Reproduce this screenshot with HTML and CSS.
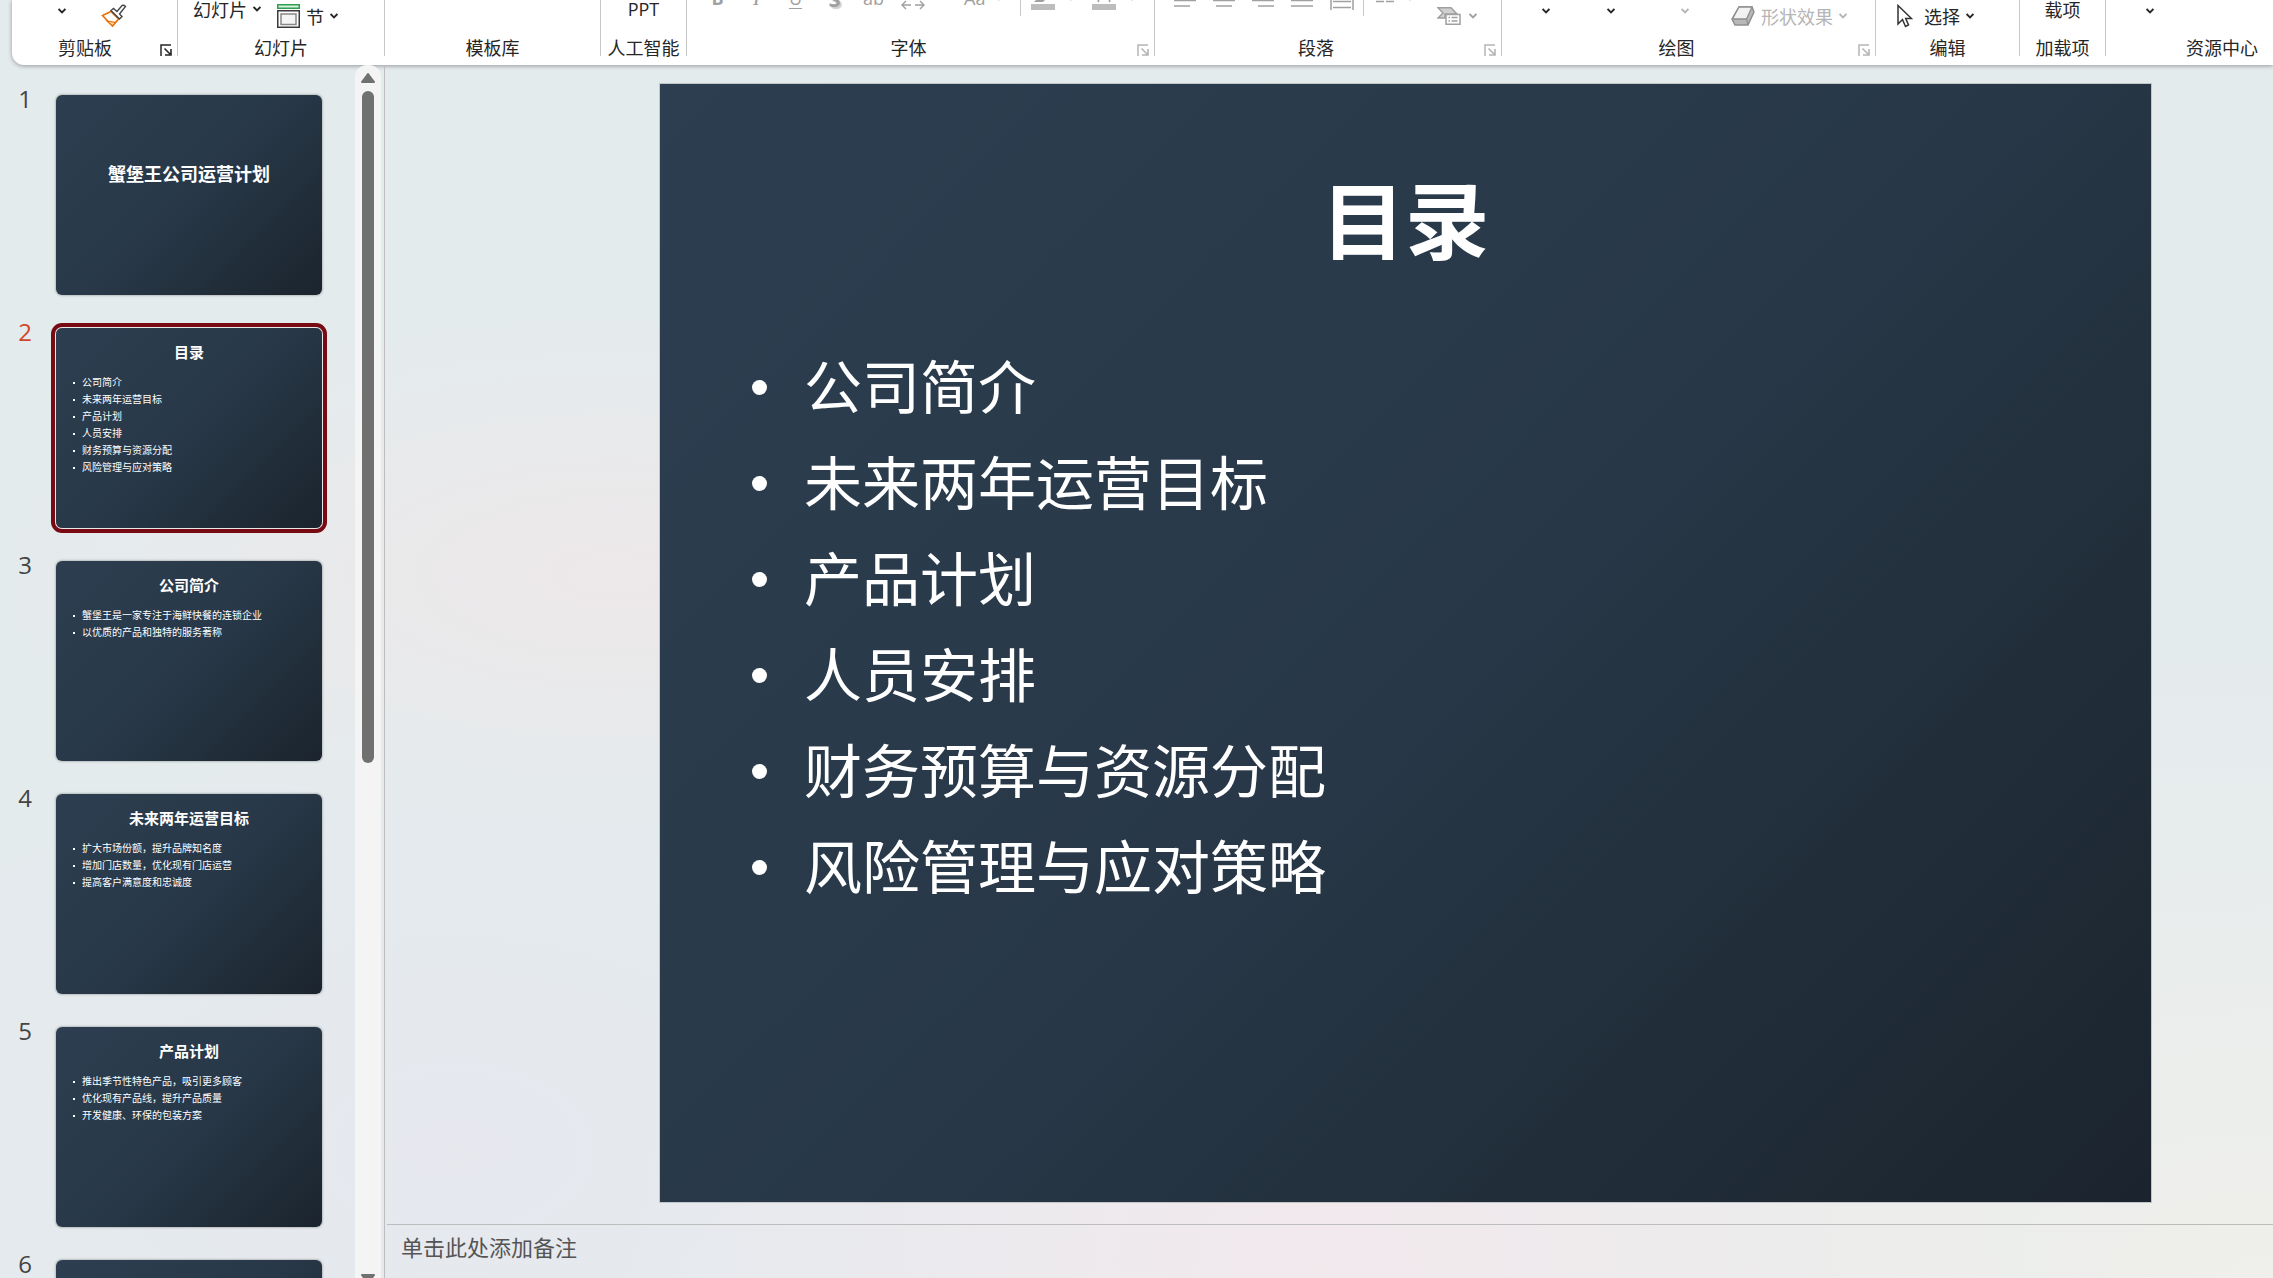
FILE: index.html
```html
<!DOCTYPE html>
<html lang="zh-CN">
<head>
    <meta charset="UTF-8">
    <meta name="viewport" content="width=device-width, initial-scale=1.0">
    <title>蟹堡王公司运营计划</title>
    <link rel="stylesheet" href="styles.css">
</head>
<body>
    <!-- Shared symbols -->
    <svg class="symbols" aria-hidden="true">
        <symbol id="chevron" viewBox="0 0 8 8">
            <path d="M0.600 2 L4 5.400 L7.400 2" fill="none" stroke="currentColor" stroke-width="1.8"/>
        </symbol>
        <symbol id="launcher" viewBox="0 0 12 12">
            <path d="M1 12 V1 H11" fill="none" stroke="currentColor" stroke-width="1.5"/>
            <path d="M4.5 4.5 L10.5 10.5 M11 5 V11 H5" fill="none" stroke="currentColor" stroke-width="1.6"/>
        </symbol>
    </svg>

    <header class="ribbon">
        <section class="group clipboard">
            <div class="tools">
                <button class="tool upper" aria-label="粘贴选项"><svg class="chevron"><use href="#chevron"/></svg></button>
                <button class="tool lower" aria-label="格式刷">
                    <svg width="26" height="24" viewBox="0 0 26 24">
                        <path d="M1.5 11.5 L10 7.5 L17.500 15 L11.500 22 Z" fill="#fff" stroke="#e8710a" stroke-width="1.6"/>
                        <path d="M6 17 L14.500 18.500 L11.500 22 Z" fill="#fcd9a0" stroke="#e8710a" stroke-width="1.2"/>
                        <path d="M10 6.500 L12.500 4.500 L16 7.500 L21 1.500 Q23.500 0.500 24.500 2.500 L18.500 10 L21 12.500 L18.500 15 Z" fill="#fff" stroke="#444" stroke-width="1.4"/>
                    </svg>
                </button>
            </div>
            <div class="caption"><span>剪贴板</span><button class="launcher" aria-label="剪贴板选项"><svg width="12" height="12"><use href="#launcher"/></svg></button></div>
        </section>

        <section class="group slides">
            <div class="tools">
                <button class="tool top">幻灯片<svg class="chevron"><use href="#chevron"/></svg></button>
                <button class="tool lower">
                    <svg width="23" height="24" viewBox="0 0 23 24">
                        <rect x="0.750" y="0.750" width="21.500" height="3.500" fill="#d9f2df" stroke="#2f9e4f" stroke-width="1.500"/>
                        <rect x="0.750" y="6.750" width="21.500" height="16.500" fill="#fff" stroke="#3b3b3b" stroke-width="1.500"/>
                        <rect x="4" y="10" width="15" height="10.500" fill="#f5f5f5" stroke="#8a8886" stroke-width="1.500"/>
                    </svg>节<svg class="chevron"><use href="#chevron"/></svg>
                </button>
            </div>
            <div class="caption"><span>幻灯片</span></div>
        </section>

        <section class="group templates">
            <div class="tools"></div>
            <div class="caption"><span>模板库</span></div>
        </section>

        <section class="group ai">
            <div class="tools"><button class="tool top">PPT</button></div>
            <div class="caption"><span>人工智能</span></div>
        </section>

        <section class="group font">
            <div class="tools disabled">
                <button class="tool cut format bold" disabled>B</button>
                <button class="tool cut format italic" disabled>I</button>
                <button class="tool cut format underline" disabled>U</button>
                <button class="tool cut format shadow" disabled>S</button>
                <button class="tool cut format strike" disabled>ab</button>
                <button class="tool cut format" disabled aria-label="字符间距">
                    <svg width="24" height="34" viewBox="0 0 24 34"><path d="M10 24 H1 M5 20 L1 24 L5 28 M14 24 H23 M19 20 L23 24 L19 28" fill="none" stroke="currentColor" stroke-width="1.400"/></svg>
                </button>
                <button class="tool cut case" disabled>Aa<svg class="chevron"><use href="#chevron"/></svg></button>
                <span class="divider"></span>
                <button class="tool cut ink" disabled aria-label="突出显示">
                    <svg width="24" height="34" viewBox="0 0 24 34"><path d="M3 21 L10 14 L15 18 L12 21 Z" fill="currentColor"/><rect y="23" width="24" height="6" fill="#bdbdbd"/></svg><svg class="chevron"><use href="#chevron"/></svg>
                </button>
                <button class="tool cut ink" disabled aria-label="字体颜色">
                    <svg width="24" height="34" viewBox="0 0 24 34"><path d="M6 21 L12 5 L18 21 M8 16.500 H16" fill="none" stroke="currentColor" stroke-width="1.600"/><rect y="23" width="24" height="6" fill="#bdbdbd"/></svg><svg class="chevron"><use href="#chevron"/></svg>
                </button>
            </div>
            <div class="caption"><span>字体</span><button class="launcher" disabled aria-label="字体选项"><svg width="12" height="12"><use href="#launcher"/></svg></button></div>
        </section>

        <section class="group paragraph">
            <div class="tools disabled">
                <button class="tool cut align" disabled aria-label="左对齐"><svg width="22" height="34"><path d="M0 19.500 H22 M0 25 H16" stroke="currentColor" stroke-width="1.500"/></svg></button>
                <button class="tool cut align" disabled aria-label="居中"><svg width="22" height="34"><path d="M0 19.500 H22 M3 25 H19" stroke="currentColor" stroke-width="1.500"/></svg></button>
                <button class="tool cut align" disabled aria-label="右对齐"><svg width="22" height="34"><path d="M0 19.500 H22 M6 25 H22" stroke="currentColor" stroke-width="1.500"/></svg></button>
                <button class="tool cut align" disabled aria-label="两端对齐"><svg width="22" height="34"><path d="M0 19.500 H22 M0 25 H22" stroke="currentColor" stroke-width="1.500"/></svg></button>
                <button class="tool cut align" disabled aria-label="分散对齐"><svg width="24" height="34"><path d="M1 7 V29 M23 7 V29 M3 20.500 H21 M3 26.500 H21" stroke="currentColor" stroke-width="1.500"/></svg></button>
                <span class="divider"></span>
                <button class="tool cut columns" disabled aria-label="分栏"><svg width="18" height="34"><path d="M0 20.500 H8 M10 20.500 H18" stroke="currentColor" stroke-width="1.500"/></svg><svg class="chevron"><use href="#chevron"/></svg></button>
                <button class="tool lower smart" disabled aria-label="转换为 SmartArt">
                    <svg width="24" height="18" viewBox="0 0 24 18">
                        <path d="M1 0.750 H14 L20 7 H8 V11 H1 L6 6 Z" fill="#d0d0d0" stroke="#a0a0a0" stroke-width="1.500"/>
                        <rect x="9" y="7.500" width="14" height="9.750" fill="#fff" stroke="#a0a0a0" stroke-width="1.500"/>
                        <path d="M11.500 10.500 H13 M14.500 10.500 H20.500 M11.500 14 H13 M14.500 14 H20.500" stroke="#a0a0a0" stroke-width="1.400"/>
                    </svg><svg class="chevron"><use href="#chevron"/></svg>
                </button>
            </div>
            <div class="caption"><span>段落</span><button class="launcher" disabled aria-label="段落选项"><svg width="12" height="12"><use href="#launcher"/></svg></button></div>
        </section>

        <section class="group drawing">
            <div class="tools">
                <button class="tool upper" aria-label="形状"><svg class="chevron"><use href="#chevron"/></svg></button>
                <button class="tool upper" aria-label="排列"><svg class="chevron"><use href="#chevron"/></svg></button>
                <button class="tool upper quick" disabled aria-label="快速样式"><svg class="chevron"><use href="#chevron"/></svg></button>
                <button class="tool lower effects" disabled>
                    <svg width="24" height="20" viewBox="0 0 24 20">
                        <path d="M8 1 H21 L23 6 L17 19 H4 L1 13 Z" fill="#b8b8b8" stroke="#8f8f8f" stroke-width="1.500"/>
                        <path d="M8 1 H21 L15.500 13 H1.500 Z" fill="#f2f2f2" stroke="#8f8f8f" stroke-width="1.300"/>
                        <path d="M15.500 13 L17 19" stroke="#8f8f8f" stroke-width="1.200"/>
                    </svg>形状效果<svg class="chevron"><use href="#chevron"/></svg>
                </button>
            </div>
            <div class="caption"><span>绘图</span><button class="launcher" disabled aria-label="绘图选项"><svg width="12" height="12"><use href="#launcher"/></svg></button></div>
        </section>

        <section class="group editing">
            <div class="tools">
                <button class="tool lower select">
                    <svg width="16" height="24" viewBox="0 0 16 24"><path d="M1 1.500 V20 L5.500 15.500 L8.500 22.500 L11.500 21 L8.700 14.500 H14.500 Z" fill="#fff" stroke="#333" stroke-width="1.500"/></svg>选择<svg class="chevron"><use href="#chevron"/></svg>
                </button>
            </div>
            <div class="caption"><span>编辑</span></div>
        </section>

        <section class="group addins">
            <div class="tools"><button class="tool top">载项</button></div>
            <div class="caption"><span>加载项</span></div>
        </section>

        <section class="group resources">
            <div class="tools"><button class="tool upper" aria-label="资源选项"><svg class="chevron"><use href="#chevron"/></svg></button></div>
            <div class="caption"><span>资源中心</span></div>
        </section>
    </header>

    <main class="workspace">
        <nav class="slide-panel" aria-label="幻灯片">
            <ol class="thumb-list">
                <li>
                    <span class="number">1</span>
                    <button class="thumb cover">
                        <strong>蟹堡王公司运营计划</strong>
                    </button>
                </li>
                <li class="selected">
                    <span class="number">2</span>
                    <button class="thumb">
                        <strong>目录</strong>
                        <span class="line">公司简介</span>
                        <span class="line">未来两年运营目标</span>
                        <span class="line">产品计划</span>
                        <span class="line">人员安排</span>
                        <span class="line">财务预算与资源分配</span>
                        <span class="line">风险管理与应对策略</span>
                    </button>
                </li>
                <li>
                    <span class="number">3</span>
                    <button class="thumb">
                        <strong>公司简介</strong>
                        <span class="line">蟹堡王是一家专注于海鲜快餐的连锁企业</span>
                        <span class="line">以优质的产品和独特的服务著称</span>
                    </button>
                </li>
                <li>
                    <span class="number">4</span>
                    <button class="thumb">
                        <strong>未来两年运营目标</strong>
                        <span class="line">扩大市场份额，提升品牌知名度</span>
                        <span class="line">增加门店数量，优化现有门店运营</span>
                        <span class="line">提高客户满意度和忠诚度</span>
                    </button>
                </li>
                <li>
                    <span class="number">5</span>
                    <button class="thumb">
                        <strong>产品计划</strong>
                        <span class="line">推出季节性特色产品，吸引更多顾客</span>
                        <span class="line">优化现有产品线，提升产品质量</span>
                        <span class="line">开发健康、环保的包装方案</span>
                    </button>
                </li>
                <li>
                    <span class="number">6</span>
                    <button class="thumb" aria-label="幻灯片 6"></button>
                </li>
            </ol>
            <div class="scrollbar">
                <button class="scroll-arrow" aria-label="向上滚动"><svg width="14" height="10"><path d="M7 1 L13 9 H1 Z" fill="#707070" stroke="#707070" stroke-width="2" stroke-linejoin="round"/></svg></button>
                <div class="scroll-track"><div class="scroll-thumb"></div></div>
                <button class="scroll-arrow" aria-label="向下滚动"><svg width="14" height="10"><path d="M7 9 L13 1 H1 Z" fill="#707070" stroke="#707070" stroke-width="2" stroke-linejoin="round"/></svg></button>
            </div>
        </nav>

        <section class="editor">
            <div class="stage">
                <article class="slide">
                    <h1>目录</h1>
                    <ul>
                        <li>公司简介</li>
                        <li>未来两年运营目标</li>
                        <li>产品计划</li>
                        <li>人员安排</li>
                        <li>财务预算与资源分配</li>
                        <li>风险管理与应对策略</li>
                    </ul>
                </article>
            </div>
            <textarea class="notes" aria-label="备注" placeholder="单击此处添加备注"></textarea>
        </section>
    </main>
</body>
</html>
```
FILE: styles.css
```css
* {
    box-sizing: border-box;
}
body {
    display: flex;
    flex-direction: column;
    height: 100vh;
    margin: 0;
    overflow: hidden;
    font-family: "Open Sans", "Noto Sans CJK SC", sans-serif;
    font-size: 18px;
    color: #262626;
    background:
        radial-gradient(ellipse at 58% 100%, #f2e9ed 0%, rgba(242, 233, 237, 0) 38%),
        radial-gradient(ellipse at 27% 45%, #ede8e9 0%, rgba(237, 232, 233, 0) 26%),
        radial-gradient(ellipse at 100% 100%, #efefeb 0%, rgba(239, 239, 235, 0) 35%),
        radial-gradient(ellipse at 20% 90%, #e6e8ee 0%, rgba(230, 232, 238, 0) 25%),
        #e4ebed;
}
button {
    font: inherit;
    color: inherit;
    background: none;
    border: 0;
    padding: 0;
    cursor: pointer;
}
svg {
    flex: none;
    display: block;
}
.symbols {
    display: none;
}

/* Ribbon */
.ribbon {
    display: flex;
    flex: none;
    height: 65px;
    margin-left: 12px;
    padding-left: 5px;
    overflow: hidden;
    background: #ffffff;
    border-bottom-left-radius: 12px;
    box-shadow: 0 1px 4px rgba(0, 0, 0, 0.35);
}
.group {
    flex: none;
    display: flex;
    flex-direction: column;
    height: 56px;
    border-right: 1px solid #c8c8c8;
}
.clipboard { width: 161px; }
.slides { width: 207px; }
.templates { width: 216px; }
.ai { width: 86px; }
.font { width: 468px; }
.paragraph { width: 347px; }
.drawing { width: 374px; }
.editing { width: 144px; }
.addins { width: 86px; }
.resources { width: 233px; }

.tools {
    display: flex;
    align-items: flex-start;
    height: 36px;
}
.tool {
    display: flex;
    align-items: center;
    justify-content: center;
    white-space: nowrap;
    gap: 6px;
}
.tool:disabled {
    color: #b5b5b5;
}
.tool.top { height: 18px; }
.tool.upper { height: 21px; }
.tool.lower { height: 31px; }
.tool.cut {
    height: 34px;
    margin-top: -19px;
}
.disabled .tool:disabled {
    color: #a0a0a0;
}
.chevron {
    width: 8px;
    height: 8px;
}
.divider {
    width: 1px;
    height: 16px;
    background: #c8c8c8;
}
.caption {
    display: flex;
    align-items: flex-end;
    height: 20px;
    line-height: 20px;
}
.caption span {
    flex: 1;
    padding-top: 4px;
    margin-bottom: -2px;
    text-align: center;
    white-space: nowrap;
}
.launcher {
    width: 12px;
    height: 12px;
    margin: 0 5px 0 7px;
}
.launcher:disabled {
    color: #b5b5b5;
}
.clipboard .tools {
    padding-left: 41px;
    gap: 35px;
}
.slides .tools {
    padding-left: 15px;
    gap: 16px;
}
.ai .tools,
.addins .tools {
    justify-content: center;
}
.font .tools {
    padding-left: 11px;
}
.format {
    width: 39px;
}
.bold { font-weight: bold; }
.italic {
    font-family: "Liberation Serif", serif;
    font-size: 22px;
    font-style: italic;
}
.underline {
    text-decoration: underline;
    text-underline-offset: 3px;
}
.shadow {
    font-size: 22px;
    font-weight: bold;
    text-shadow: 2px 2px 1px #d0d0d0;
}
.strike { text-decoration: line-through; }
.case {
    margin-left: 32px;
    gap: 10px;
}
.font .divider { margin: 0 10px 0 17px; }
.ink {
    gap: 12px;
    margin-right: 17px;
}
.paragraph .tools {
    padding-left: 19px;
}
.align {
    margin-right: 17px;
}
.paragraph .divider { margin-left: -8px; }
.columns {
    gap: 12px;
    margin-left: 12px;
}
.smart {
    gap: 8px;
    margin-left: 23px;
}
.drawing .tools {
    padding-left: 40px;
    gap: 57px;
}
.quick {
    margin-left: 9px;
}
.effects {
    margin-left: -15px;
}
.editing .tools {
    padding-left: 21px;
}
.select svg:first-child {
    margin-right: 5px;
}
.resources .tools {
    padding-left: 40px;
}

/* Workspace */
.workspace {
    display: flex;
    flex: 1;
    min-height: 0;
}
.slide-panel {
    display: flex;
    flex: none;
    width: 385px;
    padding-right: 3px;
    border-right: 1px solid #bdbdbd;
    overflow: hidden;
}
.thumb-list {
    flex: 1;
    margin: 0;
    padding: 20px 0 0;
    list-style: none;
}
.thumb-list li {
    display: flex;
    height: 233px;
}
.number {
    width: 56px;
    padding-right: 6px;
    font-size: 24px;
    line-height: 28px;
    text-align: center;
    color: #444444;
}
.selected .number {
    color: #d24726;
}
.thumb {
    display: flex;
    flex-direction: column;
    width: 266px;
    height: 200px;
    margin-top: 10px;
    padding: 13px 0 0 17px;
    border-radius: 6px;
    background: linear-gradient(135deg, #2c3e50 0%, #283848 50%, #212e3a 75%, #1b242e 100%);
    box-shadow: 0 0 2px 1px rgba(0, 0, 0, 0.2);
    color: #ffffff;
    text-align: left;
    font-size: 10px;
    line-height: 17px;
}
.selected .thumb {
    box-shadow: 0 0 0 1px #e8e8e8, 0 0 0 5px #780a14;
}
.thumb strong {
    margin: 0 17px 11px 0;
    font-size: 15px;
    line-height: 22px;
    text-align: center;
}
.cover strong {
    padding-top: 55px;
    font-size: 18px;
}
.line {
    display: flex;
    align-items: center;
    gap: 7px;
    white-space: nowrap;
}
.line::before {
    content: "";
    width: 2px;
    height: 2px;
    background: #ffffff;
}
.scrollbar {
    display: flex;
    flex-direction: column;
    align-items: center;
    width: 26px;
    padding-top: 8px;
    border-radius: 12px 12px 0 0;
    background: #f4f4f4;
}
.scroll-arrow {
    flex: none;
    height: 10px;
    margin-bottom: -6px;
}
.scroll-track {
    flex: 1;
    width: 12px;
    padding: 14px 0;
}
.scroll-thumb {
    height: calc(57% + 6px);
    border-radius: 6px;
    background: #707070;
}

/* Slide editor */
.editor {
    display: flex;
    flex: 1;
    flex-direction: column;
    min-width: 0;
    padding-left: 2px;
}
.stage {
    flex: 1;
    min-height: 0;
    padding: 19px 0 22px 273px;
}
.slide {
    height: 100%;
    aspect-ratio: 4 / 3;
    background: linear-gradient(135deg, #2c3e50 0%, #283848 50%, #212e3a 75%, #1b242e 100%);
    box-shadow: 0 0 0 1px #c3c5c9;
    color: #ffffff;
}
.slide h1 {
    margin: 0;
    padding: 84px 0 65px;
    font-size: 84px;
    line-height: 106px;
    text-align: center;
}
.slide ul {
    margin: 0;
    padding: 0 0 0 92px;
    list-style: none;
}
.slide li {
    display: flex;
    align-items: center;
    gap: 37px;
    font-size: 58px;
    line-height: 96px;
}
.slide li::before {
    content: "";
    width: 15px;
    height: 15px;
    border-radius: 50%;
    background: #ffffff;
}
.notes {
    flex: none;
    height: 54px;
    padding: 7px 14px;
    border: 0;
    border-top: 1px solid #bdbdbd;
    background: none;
    font: inherit;
    font-size: 22px;
    line-height: 30px;
    resize: none;
    overflow: hidden;
}
.notes::placeholder {
    color: #555555;
    opacity: 1;
}
```
